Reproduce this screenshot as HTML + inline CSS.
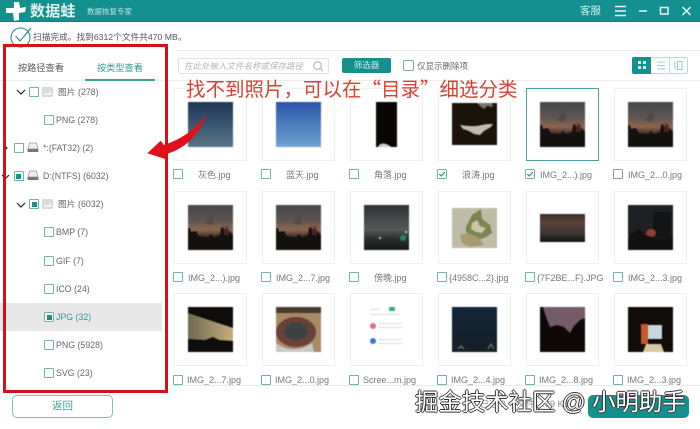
<!DOCTYPE html>
<html lang="zh"><head><meta charset="utf-8"><title>数据蛙</title>
<style>
*{box-sizing:border-box}
html{background:#fff}
html,body{margin:0;padding:0}
body{width:700px;height:429px;overflow:hidden;background:#fff;position:relative;font-family:"Liberation Sans","Noto Sans CJK SC",sans-serif;color:#666;filter:blur(.3px)}
.a{position:absolute;white-space:nowrap}
.card{position:absolute;width:73px;height:73px;border:1px solid #ecf0f2;background:#fff}
.card.sel{border:1px solid #4f9d9f}
.card svg{position:absolute;left:13px;top:13px;width:45px;height:45px;display:block;filter:blur(.5px)}
.cb{position:absolute;width:10px;height:10px;border:1px solid #6fb5ac;background:#fff;border-radius:1px}
.cb.on::after{content:"";position:absolute;left:1.5px;top:1.5px;width:5px;height:5px;background:#1f8f84}
.lb{position:absolute;font-size:9px;line-height:12px;white-space:nowrap;color:#777}
.t{position:absolute;font-size:8.800px;line-height:12px;white-space:nowrap;color:#666}
</style></head><body>

<svg width="0" height="0" style="position:absolute"><defs>
<linearGradient id="dusk" x1="0" y1="0" x2="0" y2="1"><stop offset="0" stop-color="#47474c"/><stop offset=".35" stop-color="#5f5552"/><stop offset=".55" stop-color="#8f6650"/><stop offset=".68" stop-color="#4a3630"/><stop offset="1" stop-color="#141110"/></linearGradient>
<symbol id="sunset" viewBox="0 0 45 45"><rect width="45" height="45" fill="url(#dusk)"/><path d="M22 8l3 4 1 6-4 2-5-2 3-3z" fill="#4c4646" opacity=".7"/><path d="M0 33V23l2 0 1 4 5-1 3 5 9 1 3-3 3 3 6-2 1-7 2-1 1 3 3-3 2 4 4 4V45H0z" fill="#15110e"/><rect x="36" y="21" width="5" height="9" fill="#6a3a3c" opacity=".6"/></symbol>
</defs></svg>

<!-- header -->
<div class="a" style="left:0;top:0;width:700px;height:22px;background:#14918e;border-bottom:1px solid #0f7f7c"></div>
<svg class="a" style="left:6px;top:1px" width="21" height="21" viewBox="0 0 21 21"><path d="M8 1h5l1 6 6-1-1 5-6 1 0 7-5 1-1-8-7 0 0-5 8 0z" fill="#fff"/></svg>
<div class="a" style="left:30px;top:2px;font-size:15px;line-height:19px;font-weight:700;color:#dff1ef;letter-spacing:.2px">数据蛙</div>
<div class="a" style="left:87px;top:6px;font-size:7.500px;line-height:11px;color:#bfe3e0">数据恢复专家</div>
<div class="a" style="left:580px;top:4px;font-size:10.500px;line-height:14px;color:#d5eeec">客服</div>
<svg class="a" style="left:612px;top:4px" width="84" height="14" viewBox="0 0 84 14" fill="none" stroke="#e6f5f4" stroke-width="1.500"><path d="M3 2.500h11M3 7h11M3 11.500h11"/><path d="M27 7h8"/><rect x="48.500" y="3.500" width="7.500" height="6.500"/><path d="M70.500 3l8 8M78.500 3l-8 8"/></svg>

<!-- status -->
<svg class="a" style="left:9px;top:26px" width="24" height="22" viewBox="0 0 24 22" fill="none"><circle cx="11.500" cy="11.500" r="9.500" stroke="#2f8d88" stroke-width="1.100"/><path d="M6.500 10l4.500 5 11-13" stroke="#2f8d88" stroke-width="1.200"/></svg>
<div class="a" style="left:33px;top:31px;font-size:8.700px;line-height:13px;color:#555">扫描完成。找到6312个文件共470 MB。</div>

<!-- top lines -->
<div class="a" style="left:175px;top:50px;width:525px;height:1px;background:#eee"></div>
<div class="a" style="left:0;top:80px;width:700px;height:1px;background:#eeeeee"></div>

<!-- tabs -->
<div class="a" style="left:18px;top:62px;font-size:9.200px;line-height:13px;color:#555">按路径查看</div>
<div class="a" style="left:97px;top:62px;font-size:9.200px;line-height:13px;color:#2d9c93">按类型查看</div>
<div class="a" style="left:85px;top:79px;width:70px;height:1.500px;background:#3f9e96"></div>

<!-- tree -->
<div class="a" style="left:0;top:303px;width:162px;height:28px;background:#e8e8e8"></div>
<svg class="a" style="left:0;top:0" width="40" height="230" fill="none" stroke="#222" stroke-width="1.200"><path d="M17 90l4 4 4-4M2 175l3.500 3.500L9 175M17 203l4 4 4-4"/><circle cx="6" cy="148" r="1.400" fill="#222" stroke="none"/></svg>
<div class="cb" style="left:29px;top:87px"></div>
<svg class="a" style="left:42px;top:87px" width="11" height="10" viewBox="0 0 11 10"><rect width="11" height="10" rx="1" fill="#d9d9d9"/><path d="M1 8l3-3 2 2 2-3 2 4z" fill="#f4f4f4"/></svg>
<div class="t" style="left:58px;top:86px">图片 (278)</div>
<div class="cb" style="left:44px;top:115px"></div><div class="t" style="left:56px;top:114px">PNG (278)</div>
<div class="cb" style="left:13.500px;top:143px"></div>
<svg class="a" style="left:27px;top:142px" width="12" height="11" viewBox="0 0 12 11"><path d="M2.500 1h7L11 7H1z" fill="#eee" stroke="#999" stroke-width=".7"/><rect x=".5" y="7" width="11" height="3" rx=".6" fill="#777"/></svg>
<div class="t" style="left:43px;top:142px">*:(FAT32) (2)</div>
<div class="cb on" style="left:13.500px;top:171px"></div>
<svg class="a" style="left:27px;top:170px" width="12" height="11" viewBox="0 0 12 11"><path d="M2.500 1h7L11 7H1z" fill="#eee" stroke="#999" stroke-width=".7"/><rect x=".5" y="7" width="11" height="3" rx=".6" fill="#777"/></svg>
<div class="t" style="left:43px;top:170px">D:(NTFS) (6032)</div>
<div class="cb on" style="left:29px;top:199px"></div>
<svg class="a" style="left:42px;top:199px" width="11" height="10" viewBox="0 0 11 10"><rect width="11" height="10" rx="1" fill="#d9d9d9"/><path d="M1 8l3-3 2 2 2-3 2 4z" fill="#f4f4f4"/></svg>
<div class="t" style="left:58px;top:198px">图片 (6032)</div>
<div class="cb" style="left:44px;top:227px"></div><div class="t" style="left:56px;top:226px">BMP (7)</div>
<div class="cb" style="left:44px;top:256px"></div><div class="t" style="left:56px;top:255px">GIF (7)</div>
<div class="cb" style="left:44px;top:284px"></div><div class="t" style="left:56px;top:283px">ICO (24)</div>
<div class="cb on" style="left:44px;top:312px"></div><div class="t" style="left:56px;top:311px;color:#2d9c93">JPG (32)</div>
<div class="cb" style="left:44px;top:340px"></div><div class="t" style="left:56px;top:339px">PNG (5928)</div>
<div class="cb" style="left:44px;top:368px"></div><div class="t" style="left:56px;top:367px">SVG (23)</div>

<!-- back -->
<div class="a" style="left:12px;top:395px;width:101px;height:23px;border:1px solid #7dbdb4;border-radius:5px;text-align:center;font-size:10.500px;line-height:21px;color:#3d9f96">返回</div>

<!-- toolbar -->
<div class="a" style="left:178px;top:58px;width:151px;height:16px;border:1px solid #e2e2e2;border-radius:2px;padding-left:5px;font-size:8.500px;line-height:14px;font-style:italic;color:#b5b5b5">在此处输入文件名称或保存路径</div>
<svg class="a" style="left:312px;top:60px" width="13" height="12" viewBox="0 0 13 12" fill="none" stroke="#aaa"><circle cx="5.500" cy="5.500" r="3.800"/><path d="M8.500 8.500l2.500 2.500"/></svg>
<div class="a" style="left:342px;top:58px;width:49px;height:15px;background:#14918e;border-radius:2px;text-align:center;font-size:8.500px;line-height:15px;color:#cdeae7">筛选器</div>
<div class="cb" style="left:403px;top:60px;width:11px;height:11px;border-color:#7fa9a6;border-radius:2px"></div>
<div class="a" style="left:417px;top:60px;font-size:8.500px;line-height:12px;color:#666">仅显示删除项</div>
<div class="a" style="left:632px;top:57px;width:56px;height:17px;border:1px solid #b9dcd9;border-radius:2px;background:#fff"></div>
<div class="a" style="left:632px;top:57px;width:19px;height:17px;background:#14918e;border-radius:2px 0 0 2px"></div>
<div class="a" style="left:669px;top:57px;width:1px;height:17px;background:#b9dcd9"></div>
<svg class="a" style="left:632px;top:57px" width="56" height="17" viewBox="0 0 56 17"><g fill="#d4eeeb"><rect x="6" y="4" width="3" height="3"/><rect x="11" y="4" width="3" height="3"/><rect x="6" y="9" width="3" height="3"/><rect x="11" y="9" width="3" height="3"/></g><path d="M25 5h8M25 8.500h8M25 12h8" stroke="#9ccac6"/><path d="M43 4.500v8" stroke="#9ccac6"/><rect x="45.500" y="4.500" width="4.500" height="8" fill="none" stroke="#9ccac6"/></svg>

<!-- row 1 -->
<div class="card" style="left:174px;top:88px"><svg viewBox="0 0 45 45"><defs><linearGradient id="g1" x1="0" y1="0" x2="0" y2="1"><stop offset="0" stop-color="#1d3657"/><stop offset="1" stop-color="#597587"/></linearGradient></defs><rect width="45" height="45" fill="url(#g1)"/></svg></div>
<div class="card" style="left:262px;top:88px"><svg viewBox="0 0 45 45"><defs><linearGradient id="g2" x1="0" y1="0" x2="0" y2="1"><stop offset="0" stop-color="#2a54a8"/><stop offset="1" stop-color="#6fa4d2"/></linearGradient></defs><rect width="45" height="45" fill="url(#g2)"/></svg></div>
<div class="card" style="left:350px;top:88px"><svg viewBox="0 0 45 45"><rect x="12" width="21" height="45" fill="#0b0606"/><path d="M14 45c2-5 8-4 12-1l1 1z" fill="#ccc"/></svg></div>
<div class="card" style="left:438px;top:88px"><svg viewBox="0 0 45 45"><rect width="45" height="42" y="1" fill="#1a130a"/><path d="M8 23c8 1 14 2 22 0 4-1 7-1 11-1-2 4-6 5-9 7l-4 4-6-1-5-3-6-2z" fill="#c0bdb0"/><path d="M25 1h15l1 4-6-1-3 3-4-3z" fill="#7a7568"/></svg></div>
<div class="card sel" style="left:526px;top:88px"><svg><use href="#sunset"/></svg></div>
<div class="card" style="left:614px;top:88px"><svg><use href="#sunset"/></svg></div>
<div class="cb" style="left:173px;top:169px"></div><div class="lb" style="left:198px;top:169px">灰色.jpg</div>
<div class="cb" style="left:261px;top:169px"></div><div class="lb" style="left:286px;top:169px">蓝天.jpg</div>
<div class="cb" style="left:349px;top:169px"></div><div class="lb" style="left:374px;top:169px">角落.jpg</div>
<svg class="a" style="left:437px;top:169px" width="10" height="10" viewBox="0 0 10 10" fill="none"><rect x=".5" y=".5" width="9" height="9" rx="1" stroke="#6fb5ac"/><path d="M2.300 5l2 2 3.500-4" stroke="#1f8f84" stroke-width="1.100"/></svg><div class="lb" style="left:462px;top:169px">浪涛.jpg</div>
<svg class="a" style="left:525px;top:169px" width="10" height="10" viewBox="0 0 10 10" fill="none"><rect x=".5" y=".5" width="9" height="9" rx="1" stroke="#6fb5ac"/><path d="M2.300 5l2 2 3.500-4" stroke="#1f8f84" stroke-width="1.100"/></svg><div class="lb" style="left:540px;top:169px">IMG_2...).jpg</div>
<div class="cb" style="left:613px;top:169px;border-color:#999"></div><div class="lb" style="left:628px;top:169px">IMG_2...0.jpg</div>

<!-- row 2 -->
<div class="card" style="left:174px;top:191px"><svg><use href="#sunset"/></svg></div>
<div class="card" style="left:262px;top:191px"><svg><use href="#sunset"/></svg></div>
<div class="card" style="left:350px;top:191px"><svg viewBox="0 0 45 45"><defs><linearGradient id="g3" x1="0" y1="0" x2="0" y2="1"><stop offset="0" stop-color="#2e3135"/><stop offset=".55" stop-color="#555a58"/><stop offset=".75" stop-color="#2c2f2c"/><stop offset="1" stop-color="#15181a"/></linearGradient></defs><rect width="45" height="45" fill="url(#g3)"/><circle cx="39" cy="33" r="3" fill="#1f8a5c"/><circle cx="16" cy="33" r="1" fill="#eee"/><circle cx="42" cy="27" r="1" fill="#eee"/></svg></div>
<div class="card" style="left:438px;top:191px"><svg viewBox="0 0 45 45"><rect y="3" width="45" height="40" fill="#bfbca8"/><path d="M14 22l6-12 9-6 1 10 8 6 2 8-6 4-8 3-6-3-6-5z" fill="#7b8550"/><path d="M8 30l8-2 10 4 6 8-14 2-8-4z" fill="#a99a70"/><path d="M20 18l5-3 3 6 6 2-4 5-6-1-5-3z" fill="#c9c7a6"/></svg></div>
<div class="card" style="left:526px;top:191px"><svg viewBox="0 0 45 45"><defs><linearGradient id="g4" x1="0" y1="0" x2="0" y2="1"><stop offset="0" stop-color="#3a2a24"/><stop offset=".3" stop-color="#5b4138"/><stop offset=".7" stop-color="#3a3534"/><stop offset="1" stop-color="#131010"/></linearGradient></defs><rect y="9" width="45" height="28" fill="url(#g4)"/></svg></div>
<div class="card" style="left:614px;top:191px"><svg viewBox="0 0 45 45"><rect width="45" height="45" fill="#1f2023"/><path d="M25 7h18v25H25z" fill="#131416"/><ellipse cx="23" cy="28" rx="5" ry="4" fill="#8f3f30"/><path d="M0 36l4-8 7-4 6 6 10 3 18-1v13H0z" fill="#121110"/></svg></div>
<div class="cb" style="left:173px;top:272px"></div><div class="lb" style="left:188px;top:272px">IMG_2...).jpg</div>
<div class="cb" style="left:261px;top:272px"></div><div class="lb" style="left:276px;top:272px">IMG_2...7.jpg</div>
<div class="cb" style="left:349px;top:272px"></div><div class="lb" style="left:374px;top:272px">傍晚.jpg</div>
<div class="cb" style="left:437px;top:272px"></div><div class="lb" style="left:449px;top:272px">{4958C...2}.jpg</div>
<div class="cb" style="left:525px;top:272px"></div><div class="lb" style="left:537px;top:272px">{7F2BE...F}.JPG</div>
<div class="cb" style="left:613px;top:272px"></div><div class="lb" style="left:628px;top:272px">IMG_2...3.jpg</div>

<!-- row 3 -->
<div class="card" style="left:174px;top:293px"><svg viewBox="0 0 45 45"><defs><linearGradient id="g6" x1="0" y1="0" x2="1" y2="0"><stop offset="0" stop-color="#6e6a50"/><stop offset="1" stop-color="#c8ae80"/></linearGradient></defs><rect width="45" height="45" fill="#0e0d0c"/><path d="M0 6L45 21V34L31 33 25 30 17 33 0 32z" fill="url(#g6)"/></svg></div>
<div class="card" style="left:262px;top:293px"><svg viewBox="0 0 45 45"><rect width="45" height="45" fill="#a98a62"/><rect width="45" height="6" fill="#4a3a32"/><ellipse cx="20" cy="25" rx="20" ry="15" fill="#6a4238"/><ellipse cx="20" cy="24" rx="12" ry="9" fill="#3e4242"/><path d="M0 36c10 8 25 8 36 0l2 9H0z" fill="#c8c8c8"/></svg></div>
<div class="card" style="left:350px;top:293px"><svg viewBox="0 0 45 45"><g fill="#d5d9df"><rect x="6" y="2" width="10" height="1"/><rect x="6" y="7" width="30" height="1"/><rect x="14" y="16" width="24" height="1"/><rect x="14" y="20" width="24" height="1"/><rect x="14" y="32" width="24" height="1"/><rect x="14" y="36" width="24" height="1"/></g><rect x="25" y="0" width="6" height="4" fill="#35ad8c"/><circle cx="9" cy="19" r="3" fill="#e56b80"/><circle cx="9" cy="34" r="3" fill="#3d6fd8"/></svg></div>
<div class="card" style="left:438px;top:293px"><svg viewBox="0 0 45 45"><defs><linearGradient id="g5" x1="0" y1="0" x2="0" y2="1"><stop offset="0" stop-color="#12263c"/><stop offset="1" stop-color="#161f26"/></linearGradient></defs><rect width="45" height="45" fill="url(#g5)"/><path d="M6 42l3-3 3 3M36 42l3-5 3 5" stroke="#7a8a8a" fill="none"/></svg></div>
<div class="card" style="left:526px;top:293px"><svg viewBox="0 0 45 45"><rect width="45" height="45" fill="#0e0808"/><path d="M3 0h42v11l-5 2-6 6-4 7-6-6-7-2-7 2-4-10z" fill="#755a68"/></svg></div>
<div class="card" style="left:614px;top:293px"><svg viewBox="0 0 45 45"><rect width="45" height="45" fill="#120c08"/><rect x="13" y="17" width="7" height="20" fill="#c65a28"/><rect x="20" y="18" width="14" height="14" fill="#c8d8de"/><path d="M18 37h15l3 8H15z" fill="#d8c8a4"/></svg></div>
<div class="cb" style="left:173px;top:375px"></div><div class="lb" style="left:187px;top:374px">IMG_2...7.jpg</div>
<div class="cb" style="left:261px;top:375px"></div><div class="lb" style="left:275px;top:374px">IMG_2...0.jpg</div>
<div class="cb" style="left:349px;top:375px"></div><div class="lb" style="left:363px;top:374px">Scree...m.jpg</div>
<div class="cb" style="left:437px;top:375px"></div><div class="lb" style="left:451px;top:374px">IMG_2...4.jpg</div>
<div class="cb" style="left:525px;top:375px"></div><div class="lb" style="left:539px;top:374px">IMG_2...8.jpg</div>
<div class="cb" style="left:613px;top:375px"></div><div class="lb" style="left:627px;top:374px">IMG_2...3.jpg</div>

<!-- bottom -->
<div class="a" style="left:170px;top:385px;width:530px;height:1px;background:#e9e9e9"></div>
<div class="a" style="left:480px;top:398px;font-size:9px;line-height:12px;color:#888">已选 2 个文件 ...89 KB</div>
<div class="a" style="left:588px;top:395px;width:101px;height:23px;background:#14918e;border-radius:5px"></div>

<!-- red frame + annotation -->
<div class="a" style="left:3px;top:44px;width:165px;height:349px;border:3.500px solid #d0121b"></div>
<svg class="a" style="left:140px;top:100px" width="80" height="65" viewBox="0 0 80 65"><path d="M66 12C60 27 42 39 24 45L20.700 40.700 7.300 53.300 26 59.300 25.500 54C44 50 62 33 66 12Z" fill="#e0101c"/></svg>
<div class="a" style="left:186px;top:76px;font-size:19.500px;line-height:24px;color:#d9402f;font-family:'Noto Sans CJK SC',sans-serif">找不到照片，可以在“目录”细选分类</div>

<!-- watermark -->
<div class="a" style="left:415px;top:389px;font-size:23.400px;line-height:27px;color:#fff;text-shadow:-1px 0 #333,1px 0 #333,0 -1px #333,0 1px #333">掘金技术社区 @ 小明助手</div>

</body></html>
